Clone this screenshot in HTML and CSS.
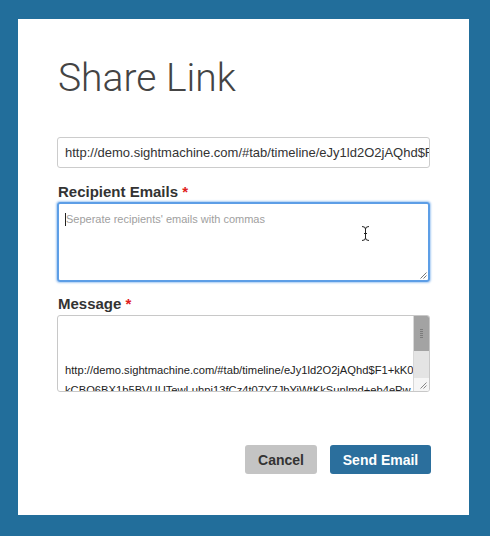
FILE: index.html
```html
<!DOCTYPE html>
<html>
<head>
<meta charset="utf-8">
<link rel="stylesheet" href="styles.css">
</head>
<body>
<div class="modal">
  <h1 class="title">Share Link</h1>
  <div class="url-input">http://demo.sightmachine.com/#tab/timeline/eJy1ld2O2jAQhd$F1+kK0kCBQ6BX1b5BVUUTewLuhpi13fCz4t07Y7JbYiWtKkSunlmd+eb4ePw</div>
  <label class="field-label">Recipient Emails <span class="req">*</span></label>
  <div class="textarea focused">
    <span class="caret"></span><span class="placeholder">Seperate recipients' emails with commas</span>
    <svg class="grip" width="8" height="8" viewBox="0 0 8 8"><path d="M7.5 1.5 L1.5 7.5 M7.5 4.5 L4.5 7.5" stroke="#777" stroke-width="1" fill="none"/></svg>
    <svg class="ibeam" width="9" height="15" viewBox="0 0 9 15"><path d="M1 0.5 Q4.5 0.5 4.5 3 Q4.5 0.5 8 0.5 M4.5 3 V12 M1 14.5 Q4.5 14.5 4.5 12 Q4.5 14.5 8 14.5 M3 7.5 H6" stroke="#222" stroke-width="1" fill="none"/></svg>
  </div>
  <label class="field-label msg-label">Message <span class="req">*</span></label>
  <div class="textarea message">
    <div class="msg-text">
      <div class="line">http://demo.sightmachine.com/#tab/timeline/eJy1ld2O2jAQhd$F1+kK0</div>
      <div class="line">kCBQ6BX1b5BVUUTewLuhpi13fCz4t07Y7JbYiWtKkSunlmd+eb4ePw</div>
    </div>
    <div class="scrollbar">
      <div class="thumb"><span class="dots"></span></div>
      <div class="track"></div>
      <div class="corner">
        <svg width="8" height="8" viewBox="0 0 8 8"><path d="M7.5 1.5 L1.5 7.5 M7.5 4.5 L4.5 7.5" stroke="#888" stroke-width="1" fill="none"/></svg>
      </div>
    </div>
  </div>
  <div class="actions">
    <button class="btn btn-cancel">Cancel</button>
    <button class="btn btn-send">Send Email</button>
  </div>
</div>
</body>
</html>
```

FILE: styles.css
```css
html, body {
  margin: 0;
  padding: 0;
}
body {
  background: #226e9b;
  width: 490px;
  height: 536px;
  padding: 19px 0 0 18px;
  box-sizing: border-box;
  font-family: "Liberation Sans", Arial, sans-serif;
}
.modal {
  width: 451px;
  height: 496px;
  background: #fff;
  box-sizing: border-box;
  padding: 0 39px 0 39px;
  display: flex;
  flex-direction: column;
}
.title {
  margin: 39px 0 0 1px;
  font-family: "Roboto", "Liberation Sans", sans-serif;
  font-weight: 300;
  font-size: 39px;
  line-height: 40px;
  color: #444;
}
.url-input {
  margin-top: 39px;
  height: 31px;
  box-sizing: border-box;
  border: 1px solid #ccc;
  border-radius: 3px;
  padding: 0 7px;
  font-size: 13px;
  line-height: 29px;
  color: #333;
  white-space: nowrap;
  overflow: hidden;
}
.field-label {
  display: block;
  margin: 15px 0 1px 1px;
  font-size: 15px;
  font-weight: bold;
  line-height: 18px;
  color: #333;
}
.msg-label {
  margin: 13px 0 2px 1px;
}
.req {
  color: #e0201c;
}
.textarea {
  position: relative;
  box-sizing: border-box;
  border: 1px solid #c8c8c8;
  border-radius: 3px;
  overflow: hidden;
}
.focused {
  height: 80px;
  border: 2px solid #5d9ee6;
  box-shadow: 0 0 2px 1px #a9ccf3;
  padding: 8px 6px;
  font-size: 11px;
  line-height: 14px;
}
.caret {
  display: inline-block;
  width: 1px;
  height: 13px;
  background: #222;
  vertical-align: -3px;
}
.placeholder {
  color: #a0a0a0;
}
.grip {
  position: absolute;
  right: 1px;
  bottom: 1px;
}
.ibeam {
  position: absolute;
  left: 302px;
  top: 22px;
}
.message {
  height: 77px;
  display: flex;
}
.msg-text {
  flex: 1;
  padding: 44px 0 0 7px;
  font-size: 11.2px;
  line-height: 20px;
  color: #222;
  white-space: nowrap;
  overflow: hidden;
}
.scrollbar {
  width: 15px;
  display: flex;
  flex-direction: column;
  border-left: 1px solid #d8d8d8;
}
.thumb {
  height: 35px;
  background: #a3a3a3;
  display: flex;
  justify-content: center;
  align-items: center;
}
.dots {
  width: 3px;
  height: 10px;
  background-image: repeating-linear-gradient(#7c7c7c 0 1px, transparent 1px 2px);
}
.track {
  height: 27px;
  background: #e4e4e4;
}
.corner {
  flex: 1;
  background: #f6f6f6;
  display: flex;
  justify-content: flex-end;
  align-items: flex-end;
  padding: 0 2px 2px 0;
}
.corner svg {
  display: block;
}
.actions {
  margin-top: 53px;
  margin-right: -1px;
  display: flex;
  justify-content: flex-end;
  gap: 13px;
}
.btn {
  height: 29px;
  border: none;
  border-radius: 3px;
  font-family: "Liberation Sans", Arial, sans-serif;
  font-size: 14px;
  font-weight: bold;
  padding: 0;
  cursor: pointer;
}
.btn-cancel {
  width: 72px;
  background: #c4c4c4;
  color: #333;
}
.btn-send {
  width: 101px;
  background: #2b6f9d;
  color: #fff;
}
```
